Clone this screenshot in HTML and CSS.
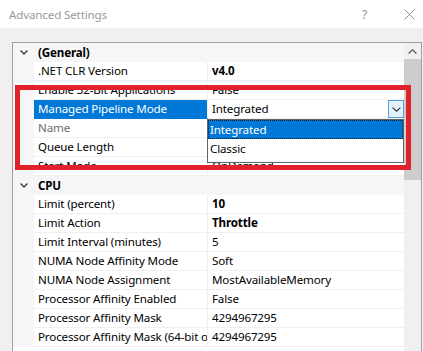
FILE: index.html
```html
<!DOCTYPE html>
<html>
<head>
<meta charset="utf-8">
<title>Advanced Settings</title>
<link rel="stylesheet" href="styles.css">
</head>
<body>
<div class="window">
  <div class="titlebar">
    <span class="title">Advanced Settings</span>
    <span class="help">?</span>
    <span class="close"><svg width="11" height="11" viewBox="0 0 11 11"><path d="M0.5 0.5 L10.5 10.5 M10.5 0.5 L0.5 10.5" stroke="#8f8f8f" stroke-width="1" fill="none"/></svg></span>
  </div>
  <div class="body">
    <div class="grid">
      <div class="rows">
        <div class="row cat">
          <span class="margin"><svg class="chev" width="8" height="5" viewBox="0 0 8 5"><polyline points="0.6,0.6 4,4 7.4,0.6" fill="none" stroke="#3c3c3c" stroke-width="1.4"/></svg></span>
          <span class="label">(General)</span>
        </div>
        <div class="row"><span class="margin"></span><span class="name">.NET CLR Version</span><span class="value bold">v4.0</span></div>
        <div class="row"><span class="margin"></span><span class="name">Enable 32-Bit Applications</span><span class="value">False</span></div>
        <div class="row"><span class="margin"></span><span class="name selected">Managed Pipeline Mode</span><span class="value combo"><span>Integrated</span><span class="combo-btn"><svg width="9" height="5" viewBox="0 0 9 5"><polyline points="0.6,0.6 4.5,4.2 8.4,0.6" fill="none" stroke="#333" stroke-width="1.2"/></svg></span></span></div>
        <div class="row"><span class="margin"></span><span class="name readonly">Name</span><span class="value"></span></div>
        <div class="row"><span class="margin"></span><span class="name">Queue Length</span><span class="value"></span></div>
        <div class="row"><span class="margin"></span><span class="name">Start Mode</span><span class="value">OnDemand</span></div>
        <div class="row cat">
          <span class="margin"><svg class="chev" width="8" height="5" viewBox="0 0 8 5"><polyline points="0.6,0.6 4,4 7.4,0.6" fill="none" stroke="#3c3c3c" stroke-width="1.4"/></svg></span>
          <span class="label">CPU</span>
        </div>
        <div class="row"><span class="margin"></span><span class="name">Limit (percent)</span><span class="value bold">10</span></div>
        <div class="row"><span class="margin"></span><span class="name">Limit Action</span><span class="value bold">Throttle</span></div>
        <div class="row"><span class="margin"></span><span class="name">Limit Interval (minutes)</span><span class="value">5</span></div>
        <div class="row"><span class="margin"></span><span class="name">NUMA Node Affinity Mode</span><span class="value">Soft</span></div>
        <div class="row"><span class="margin"></span><span class="name">NUMA Node Assignment</span><span class="value">MostAvailableMemory</span></div>
        <div class="row"><span class="margin"></span><span class="name">Processor Affinity Enabled</span><span class="value">False</span></div>
        <div class="row"><span class="margin"></span><span class="name">Processor Affinity Mask</span><span class="value">4294967295</span></div>
        <div class="row"><span class="margin"></span><span class="name">Processor Affinity Mask (64-bit option)</span><span class="value">4294967295</span></div>
      </div>
      <div class="scrollbar">
        <div class="sb-up"><svg width="9" height="5" viewBox="0 0 9 5"><polyline points="0.6,4.4 4.5,0.8 8.4,4.4" fill="none" stroke="#606060" stroke-width="1.4"/></svg></div>
        <div class="sb-thumb"></div>
        <div class="sb-track"></div>
      </div>
    </div>
  </div>
  <div class="dropdown-list">
    <div class="opt active">Integrated</div>
    <div class="opt">Classic</div>
  </div>
  <div class="annot"></div>
</div>
</body>
</html>
```
FILE: styles.css
```css
html, body {
  margin: 0;
  padding: 0;
  background: #f0f0f0;
}
body {
  font-family: "Noto Sans", "Open Sans", sans-serif;
  font-size: 11.6px;
  letter-spacing: -0.15px;
  color: #000;
}
.window {
  position: relative;
  width: 423px;
  height: 351px;
  overflow: hidden;
  background: #f0f0f0;
}
.titlebar {
  height: 28px;
  background: #ffffff;
  display: flex;
  align-items: center;
  padding-left: 9px;
  color: #999999;
  font-size: 11.6px;
}
.title { flex: 1; }
.help {
  font-size: 12px;
  color: #8f8f8f;
}
.close {
  display: flex;
  margin-left: 37px;
  margin-right: 8px;
}
.body {
  padding: 14px 0 0 12px;
}
.grid {
  display: flex;
  width: 408px;
  height: 330px;
  border: 1px solid #a0a0a0;
  background: #fff;
}
.rows {
  width: 391px;
  flex: none;
}
.row {
  display: flex;
  height: 19px;
}
.margin {
  width: 21px;
  flex: none;
  background: #f6f6f8;
  display: flex;
  align-items: center;
  justify-content: center;
}
.cat {
  background: #f6f6f8;
  font-weight: bold;
}
.cat .label {
  padding-left: 4px;
  line-height: 19px;
}
.name {
  width: 174px;
  flex: none;
  box-sizing: border-box;
  padding-left: 4px;
  border-right: 1px solid #f0f0f0;
  border-bottom: 1px solid #f0f0f0;
  line-height: 18px;
  white-space: nowrap;
  overflow: hidden;
}
.name.selected {
  background: #0078d7;
  color: #fff;
  border-bottom-color: #0078d7;
}
.name.readonly {
  color: #6d6d6d;
}
.value {
  flex: 1;
  padding-left: 4px;
  border-bottom: 1px solid #f0f0f0;
  line-height: 18px;
  white-space: nowrap;
  overflow: hidden;
}
.bold { font-weight: bold; }
.combo {
  display: flex;
  justify-content: space-between;
  align-items: flex-start;
  background: #fff;
}
.combo-btn {
  width: 14px;
  height: 16px;
  border: 1px solid #569de5;
  background: #e5f1fb;
  display: flex;
  align-items: center;
  justify-content: center;
}
.scrollbar {
  width: 17px;
  flex: none;
  display: flex;
  flex-direction: column;
  background: #f0f0f0;
}
.sb-up {
  height: 16px;
  display: flex;
  align-items: center;
  justify-content: center;
}
.sb-thumb {
  height: 121px;
  background: #cdcdcd;
}
.sb-track {
  flex: 1;
}
.dropdown-list {
  position: absolute;
  left: 207px;
  top: 119px;
  width: 195px;
  height: 42px;
  border: 1px solid #646464;
  background: #fff;
}
.opt {
  height: 19px;
  line-height: 19px;
  padding-left: 2px;
}
.opt.active {
  background: #0078d7;
  color: #fff;
  outline: 1px dotted #1a1a1a;
  outline-offset: -1px;
}
.annot {
  position: absolute;
  left: 15px;
  top: 85px;
  width: 396px;
  height: 85px;
  box-sizing: border-box;
  border: 5px solid #e1222d;
}
```
